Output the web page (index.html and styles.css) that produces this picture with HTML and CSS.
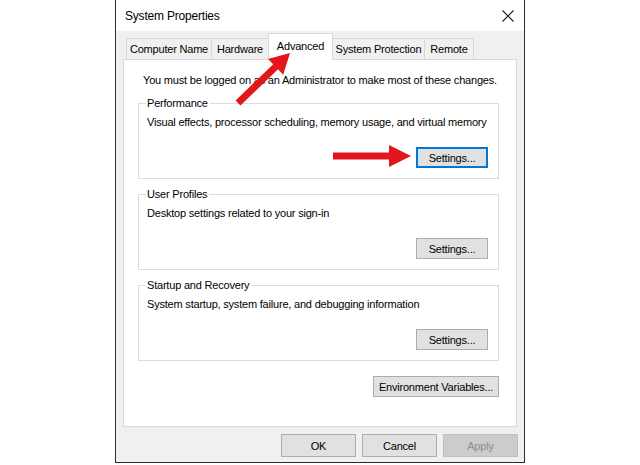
FILE: index.html
```html
<!DOCTYPE html>
<html lang="en">
<head>
    <meta charset="UTF-8">
    <title>System Properties</title>
    <link rel="stylesheet" href="styles.css">
</head>
<body>
    <!-- Dialog window -->
    <div class="window">
        <div class="titlebar">
            <span class="title">System Properties</span>
            <svg class="close" width="12" height="12" viewBox="0 0 12 12">
                <path d="M0.5 0.5 L11.5 11.5 M11.5 0.5 L0.5 11.5" stroke="#1a1a1a" stroke-width="1.1" fill="none"/>
            </svg>
        </div>
        <div class="content">
            <div class="tabs">
                <div class="tab">Computer Name</div>
                <div class="tab">Hardware</div>
                <div class="tab active">Advanced</div>
                <div class="tab">System Protection</div>
                <div class="tab">Remote</div>
            </div>
            <div class="panel">
                <p class="note">You must be logged on as an Administrator to make most of these changes.</p>

                <fieldset class="group">
                    <legend>Performance</legend>
                    <p class="desc">Visual effects, processor scheduling, memory usage, and virtual memory</p>
                    <div class="row"><button class="btn focused">Settings...</button></div>
                </fieldset>

                <fieldset class="group">
                    <legend>User Profiles</legend>
                    <p class="desc">Desktop settings related to your sign-in</p>
                    <div class="row"><button class="btn">Settings...</button></div>
                </fieldset>

                <fieldset class="group">
                    <legend>Startup and Recovery</legend>
                    <p class="desc">System startup, system failure, and debugging information</p>
                    <div class="row"><button class="btn">Settings...</button></div>
                </fieldset>

                <div class="row env"><button class="btn wide">Environment Variables...</button></div>
            </div>
            <div class="footer">
                <button class="btn big">OK</button>
                <button class="btn big">Cancel</button>
                <button class="btn big disabled">Apply</button>
            </div>
        </div>
    </div>

    <!-- Red arrows drawn over the screenshot -->
    <svg class="arrows" width="640" height="465" viewBox="0 0 640 465">
        <polygon points="235.6,100.5 273.2,64.3 268,58.9 290,53 283.2,74.7 278,69.3 240.4,105.5" fill="#e3161b"/>
        <polygon points="333,152.5 389,152.5 389,145 411,156 389,167 389,159.5 333,159.5" fill="#e3161b"/>
    </svg>
</body>
</html>
```

FILE: styles.css
```css
/* Fondo general */
body {
    margin: 0;
    background: #fff;
    font-family: "Liberation Sans", Arial, sans-serif;
    font-size: 11px;
    letter-spacing: -0.2px;
    color: #000;
    display: flex;
    justify-content: center;
    height: 465px;
    overflow: hidden;
}
/* Ventana del dialogo */
.window {
    width: 410px;
    height: 463px;
    box-sizing: border-box;
    border: 1px solid #2b2b2b;
    border-top: none;
    background: #f0f0f0;
    display: flex;
    flex-direction: column;
    white-space: nowrap;
}
.titlebar {
    height: 31px;
    background: #fff;
    display: flex;
    align-items: center;
    justify-content: space-between;
    padding: 0 9px 0 9px;
}
.title {
    font-size: 12px;
}
.close {
    margin-right: 1px;
}
.content {
    padding: 0 6px 0 7px;
    display: flex;
    flex-direction: column;
}
/* Pestanas */
.tabs {
    display: flex;
    align-items: flex-end;
    height: 28px;
    padding-left: 3px;
}
.tab {
    box-sizing: border-box;
    height: 21px;
    line-height: 21px;
    text-align: center;
    border: 1px solid #d9d9d9;
    border-bottom: none;
    border-right: none;
    background: #f0f0f0;
}
.tab:nth-child(1) { width: 85px; }
.tab:nth-child(2) { width: 57px; }
.tab:nth-child(3) { width: 65px; }
.tab:nth-child(4) { width: 91px; }
.tab:nth-child(5) { width: 50px; }
.tab:last-child {
    border-right: 1px solid #d9d9d9;
}
.tab.active {
    height: 27px;
    line-height: 24px;
    background: #fff;
    border-right: 1px solid #d9d9d9;
    margin-bottom: -1px;
    position: relative;
}
.tab.active + .tab {
    border-left: none;
}
/* Panel de contenido */
.panel {
    height: 368px;
    box-sizing: border-box;
    background: #fff;
    border: 1px solid #d9d9d9;
    margin-right: 1px;
    padding: 11px 17px 0 14px;
}
.note {
    margin: 0 0 6px 5px;
    line-height: 18px;
}
.group {
    margin: 0 0 7px 0;
    border: 1px solid #dcdcdc;
    padding: 3px 10px 10px 8px;
    min-inline-size: 0;
}
.group + .group {
    margin-top: 1px;
}
.group legend {
    padding: 0 2px 0 1px;
    margin-left: -1px;
    line-height: 16px;
}
.desc {
    margin: 0 0 17px 0;
    line-height: 16px;
}
.row {
    display: flex;
    justify-content: flex-end;
}
.env {
    margin-top: 15px;
}
/* Botones */
.btn {
    font-family: inherit;
    font-size: 11px;
    letter-spacing: -0.2px;
    color: #000;
    background: #e1e1e1;
    border: 1px solid #adadad;
    height: 21px;
    width: 72px;
    padding: 0;
}
.btn.focused {
    border: 2px solid #0078d7;
}
.btn.wide {
    width: 126px;
}
.btn.big {
    width: 75px;
    height: 23px;
}
.btn.disabled {
    background: #cccccc;
    border-color: #bfbfbf;
    color: #8d8d8d;
}
.footer {
    display: flex;
    justify-content: flex-end;
    gap: 6px;
    padding-top: 7px;
}
/* Flechas rojas encima de todo */
.arrows {
    position: absolute;
    left: 0;
    top: 0;
    pointer-events: none;
}
```
